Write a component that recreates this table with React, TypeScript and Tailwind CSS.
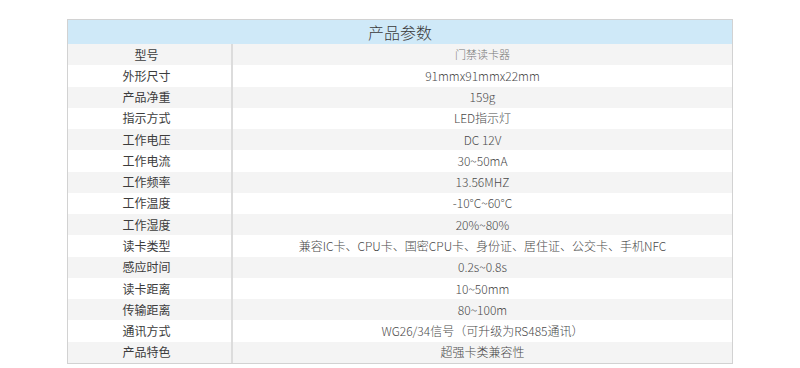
const rows: [string, string][] = [
  ["型号", "门禁读卡器"],
  ["外形尺寸", "91mmx91mmx22mm"],
  ["产品净重", "159g"],
  ["指示方式", "LED指示灯"],
  ["工作电压", "DC 12V"],
  ["工作电流", "30~50mA"],
  ["工作频率", "13.56MHZ"],
  ["工作温度", "-10°C~60°C"],
  ["工作湿度", "20%~80%"],
  ["读卡类型", "兼容IC卡、CPU卡、国密CPU卡、身份证、居住证、公交卡、手机NFC"],
  ["感应时间", "0.2s~0.8s"],
  ["读卡距离", "10~50mm"],
  ["传输距离", "80~100m"],
  ["通讯方式", "WG26/34信号（可升级为RS485通讯）"],
  ["产品特色", "超强卡类兼容性"],
];

export default function App() {
  return (
    <div
      className="h-[368px] w-[800px] overflow-hidden bg-white pl-[67px] pt-[19px] text-[#3c3c3c]"
      style={{ fontFamily: '"Noto Sans CJK SC", "Noto Sans", sans-serif' }}
    >
      <div className="w-[666px] border border-[#d2d2d2]">
        <div className="flex h-[24px] items-center justify-center bg-[#cfe9f8] text-[16px] leading-none font-light text-[#3a3a3a]">
          产品参数
        </div>
        {rows.map(([label, value], index) => (
          <div
            key={label}
            className={
              index % 2 === 0
                ? "grid h-[21.27px] grid-cols-[165px_1fr] bg-[#f4f4f4] text-[12px] leading-none"
                : "grid h-[21.27px] grid-cols-[165px_1fr] bg-white text-[12px] leading-none"
            }
          >
            <div className="flex items-center justify-center border-r-2 border-[#dcdcdc] pr-[6px]">
              {label}
            </div>
            <div
              className={
                index === 0
                  ? "flex items-center justify-center text-[11px] font-light text-[#777]"
                  : "flex items-center justify-center font-light text-[#4a4a4a]"
              }
            >
              {value}
            </div>
          </div>
        ))}
      </div>
    </div>
  );
}
